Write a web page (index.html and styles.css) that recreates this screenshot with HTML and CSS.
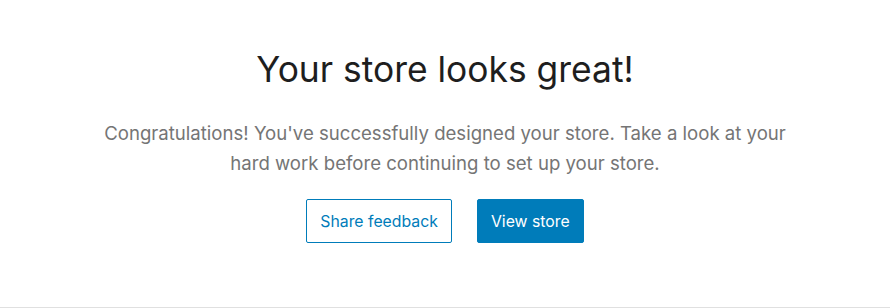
FILE: index.html
```html
<!DOCTYPE html>
<html>
<head>
<meta charset="utf-8">
<link rel="stylesheet" href="styles.css">
</head>
<body>
<div class="page">
  <div class="content">
    <h1 class="title">Your store looks great!</h1>
    <p class="desc">Congratulations! You've successfully designed your store. Take a look at your hard work before continuing to set up your store.</p>
    <div class="actions">
      <button class="btn btn-secondary">Share feedback</button>
      <button class="btn btn-primary">View store</button>
    </div>
  </div>
</div>
</body>
</html>
```
FILE: styles.css
```css
html, body {
  margin: 0;
  padding: 0;
  background: #fff;
}
body {
  font-family: Inter, Roboto, "Liberation Sans", sans-serif;
}
.page {
  height: 307px;
  border-bottom: 1px solid #e0e0e0;
  display: flex;
  justify-content: center;
}
.content {
  width: 720px;
  display: flex;
  flex-direction: column;
  align-items: center;
  padding-top: 44px;
}
.title {
  margin: 0;
  font-size: 35.4px;
  font-weight: 400;
  line-height: 52px;
  color: #1e1e1e;
}
.desc {
  margin: 22px 0 0;
  font-size: 18.6px;
  line-height: 30px;
  color: #757575;
  text-align: center;
}
.actions {
  display: flex;
  gap: 25px;
  margin-top: 21px;
}
.btn {
  font-family: inherit;
  font-size: 15.8px;
  height: 44px;
  padding: 0 13px;
  border-radius: 2px;
  cursor: pointer;
}
.btn-secondary {
  background: #fff;
  color: #007cba;
  border: 1px solid #007cba;
}
.btn-primary {
  background: #007cba;
  color: #fff;
  border: 1px solid #007cba;
}
```
